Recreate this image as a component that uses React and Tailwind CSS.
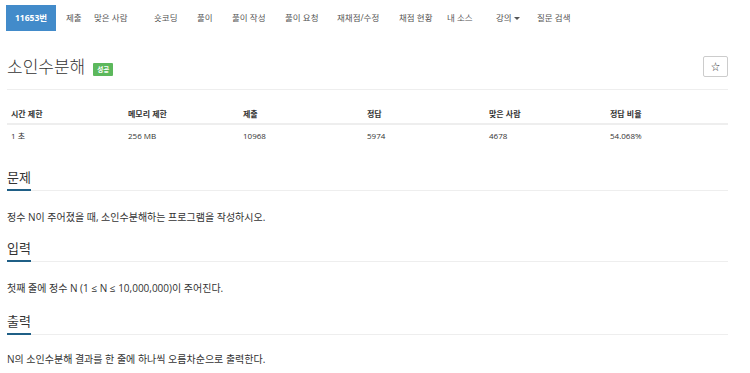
import React from 'react';

const tabs = [
  { label: '제출', w: 'w-[28px]' },
  { label: '맞은 사람', w: 'w-[60px]' },
  { label: '숏코딩', w: 'w-[43px]' },
  { label: '풀이', w: 'w-[35px]' },
  { label: '풀이 작성', w: 'w-[53px]' },
  { label: '풀이 요청', w: 'w-[52px]' },
  { label: '재채점/수정', w: 'w-[62px]' },
  { label: '채점 현황', w: 'w-[48px]' },
  { label: '내 소스', w: 'w-[49px]' },
  { label: '강의', w: 'w-[41px]', caret: true },
  { label: '질문 검색', w: 'w-[60px]' },
];

const stats = [
  ['시간 제한', '1 초'],
  ['메모리 제한', '256 MB'],
  ['제출', '10968'],
  ['정답', '5974'],
  ['맞은 사람', '4678'],
  ['정답 비율', '54.068%'],
];

const sections = [
  { title: '문제', text: '정수 N이 주어졌을 때, 소인수분해하는 프로그램을 작성하시오.', mt: 'mt-[19px]', pmt: 'mt-[17px]' },
  { title: '입력', text: '첫째 줄에 정수 N (1 ≤ N ≤ 10,000,000)이 주어진다.', mt: 'mt-[11px]', pmt: 'mt-[17px]' },
  { title: '출력', text: 'N의 소인수분해 결과를 한 줄에 하나씩 오름차순으로 출력한다.', mt: 'mt-[13px]', pmt: 'mt-[15px]' },
];

function Section({ title, text, mt, pmt }) {
  return (
    <div className={mt}>
      <div className="h-[25px] border-b border-[#eeeeee] flex items-end">
        <span className="text-[13px] leading-[22px] h-[25px] text-[#333] border-b-2 border-[#1f5f86] -mb-px">{title}</span>
      </div>
      <p className={`${pmt} h-[18px] leading-[18px] text-[10px] text-[#333]`}>{text}</p>
    </div>
  );
}

export default function App() {
  return (
    <div
      className="w-[750px] h-[373px] bg-white overflow-hidden"
      style={{ fontFamily: '"Open Sans", "Noto Sans CJK KR", sans-serif' }}
    >
      {/* top nav */}
      <ul className="flex pt-[5px] pl-[6px] text-[8.5px] text-[#555]">
        <li className="w-[50px] h-[26px] leading-[26px] text-center bg-[#428bca] text-white font-bold">11653번</li>
        {tabs.map((t) => (
          <li key={t.label} className={`${t.w} h-[26px] leading-[26px] pl-[10px] whitespace-nowrap flex items-center`}>
            {t.label}
            {t.caret && (
              <span className="ml-[2px] inline-block w-0 h-0 border-l-[3px] border-r-[3px] border-t-[3px] border-l-transparent border-r-transparent border-t-[#555]" />
            )}
          </li>
        ))}
      </ul>

      <div className="pl-[7px] pr-[22px]">
        {/* title row */}
        <div className="mt-[25px] pb-[12px] border-b border-[#eeeeee] flex items-center justify-between">
          <div className="flex items-center h-[21px]">
            <h1 className="text-[17px] font-light text-[#333] leading-[21px]">소인수분해</h1>
            <span className="ml-[8px] mt-[6px] bg-[#5cb85c] text-white text-[6.5px] font-bold px-[4px] h-[13px] leading-[13px] rounded-[1px]">성공</span>
          </div>
          <button className="w-[25px] h-[21px] border border-[#cccccc] rounded-[2px] text-[9px] text-[#333] flex items-center justify-center">☆</button>
        </div>

        {/* stats table */}
        <div className="mt-[15px] text-[8px] text-[#333]">
          <div className="grid grid-cols-[117px_115px_124px_122px_121px_1fr] h-[20px] items-center border-b-2 border-[#eeeeee] font-bold">
            {stats.map(([h]) => (
              <div key={h} className="pl-[4px]">{h}</div>
            ))}
          </div>
          <div className="grid grid-cols-[117px_115px_124px_122px_121px_1fr] h-[22px] items-center">
            {stats.map(([h, v]) => (
              <div key={h} className="pl-[4px]">{v}</div>
            ))}
          </div>
        </div>

        {sections.map((s) => (
          <Section key={s.title} {...s} />
        ))}
      </div>
    </div>
  );
}
